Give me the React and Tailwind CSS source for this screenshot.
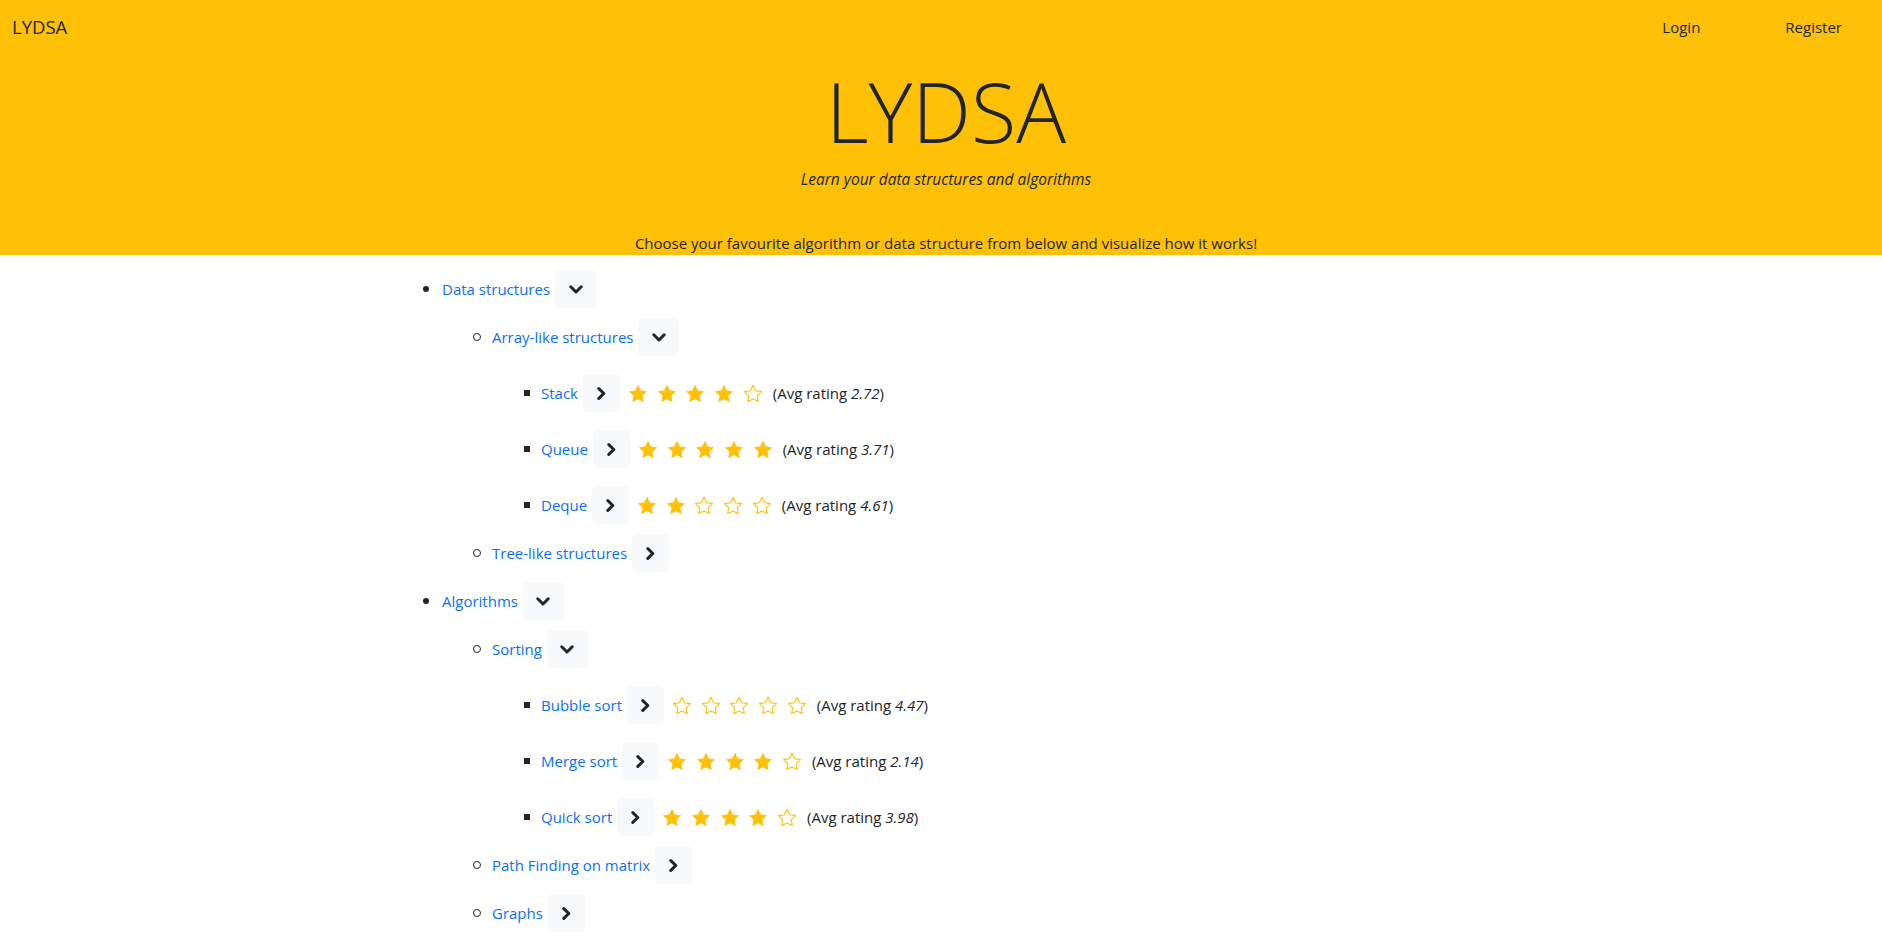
import React from 'react';

const ChevronDown = () => (
  <svg width="14" height="9" viewBox="0 0 14 9" fill="none">
    <path d="M1.8 1.8 L7 7 L12.2 1.8" stroke="#212529" strokeWidth="3" strokeLinecap="round" strokeLinejoin="round" />
  </svg>
);

const ChevronRight = () => (
  <svg width="9" height="13" viewBox="0 0 9 13" fill="none">
    <path d="M1.8 1.6 L6.8 6.5 L1.8 11.4" stroke="#212529" strokeWidth="3" strokeLinecap="round" strokeLinejoin="round" />
  </svg>
);

const Star = ({ filled }) => (
  <svg width="18" height="17" viewBox="1.6 1.6 20.8 19.8">
    <polygon
      points="12,2 15.09,8.26 22,9.27 17,14.14 18.18,21.02 12,17.77 5.82,21.02 7,14.14 2,9.27 8.91,8.26"
      fill={filled ? '#ffc107' : 'none'}
      stroke="#ffc107"
      strokeWidth={filled ? 0.6 : 1.3}
      strokeLinejoin="round"
    />
  </svg>
);

const Toggle = ({ open }) => (
  <button
    className={`ml-[5px] inline-flex items-center justify-center h-[38px] ${open ? 'w-[41px]' : 'w-[37px]'} bg-[#f8f9fa] rounded-[5px]`}
  >
    {open ? <ChevronDown /> : <ChevronRight />}
  </button>
);

const Bullet = ({ level }) => {
  if (level === 1) return <span className="w-[6px] h-[6px] rounded-full bg-[#212529] mr-[13px] shrink-0" />;
  if (level === 2) return <span className="w-[8px] h-[8px] rounded-full border border-[#212529] mr-[11px] shrink-0" />;
  return <span className="w-[6px] h-[6px] bg-[#212529] mr-[11px] shrink-0" />;
};

const Branch = ({ level, title, open, children }) => (
  <div>
    <div className="flex items-center h-12">
      <Bullet level={level} />
      <a className="text-[#0d6efd]">{title}</a>
      <Toggle open={open} />
    </div>
    {children && <div className={level === 1 ? 'ml-[50px]' : 'ml-[51px]'}>{children}</div>}
  </div>
);

const Leaf = ({ title, stars, avg }) => (
  <div className="flex items-center h-12 mt-2">
    <Bullet level={3} />
    <a className="text-[#0d6efd]">{title}</a>
    <Toggle open={false} />
    <div className="flex items-center gap-[10.7px] ml-[9px]">
      {[0, 1, 2, 3, 4].map((i) => (
        <Star key={i} filled={i < stars} />
      ))}
    </div>
    <span className="ml-[11px]">
      (Avg rating <i>{avg}</i>)
    </span>
  </div>
);

export default function App() {
  return (
    <div className="min-h-screen bg-white text-[#212529] text-[15px] font-['Open_Sans',sans-serif]">
      <header className="bg-[#ffc107]">
        <nav className="flex items-center h-[54px] pl-3 pr-[40px]">
          <span className="text-[18.5px]">LYDSA</span>
          <div className="ml-auto flex items-center gap-[85px]">
            <a>Login</a>
            <a>Register</a>
          </div>
        </nav>
        <div className="text-center pl-[10px]">
          <h1 className="text-[83px] font-light leading-none mt-[15px]">LYDSA</h1>
          <p className="italic text-[15.5px] leading-6 mt-[15px]">Learn your data structures and algorithms</p>
          <p className="leading-6 mt-[40px]">
            Choose your favourite algorithm or data structure from below and visualize how it works!
          </p>
        </div>
      </header>
      <div className="pt-[10px] pl-[423px] pb-6">
        <Branch level={1} title="Data structures" open>
          <Branch level={2} title="Array-like structures" open>
            <Leaf title="Stack" stars={4} avg="2.72" />
            <Leaf title="Queue" stars={5} avg="3.71" />
            <Leaf title="Deque" stars={2} avg="4.61" />
          </Branch>
          <Branch level={2} title="Tree-like structures" />
        </Branch>
        <Branch level={1} title="Algorithms" open>
          <Branch level={2} title="Sorting" open>
            <Leaf title="Bubble sort" stars={0} avg="4.47" />
            <Leaf title="Merge sort" stars={4} avg="2.14" />
            <Leaf title="Quick sort" stars={4} avg="3.98" />
          </Branch>
          <Branch level={2} title="Path Finding on matrix" />
          <Branch level={2} title="Graphs" />
        </Branch>
      </div>
    </div>
  );
}
